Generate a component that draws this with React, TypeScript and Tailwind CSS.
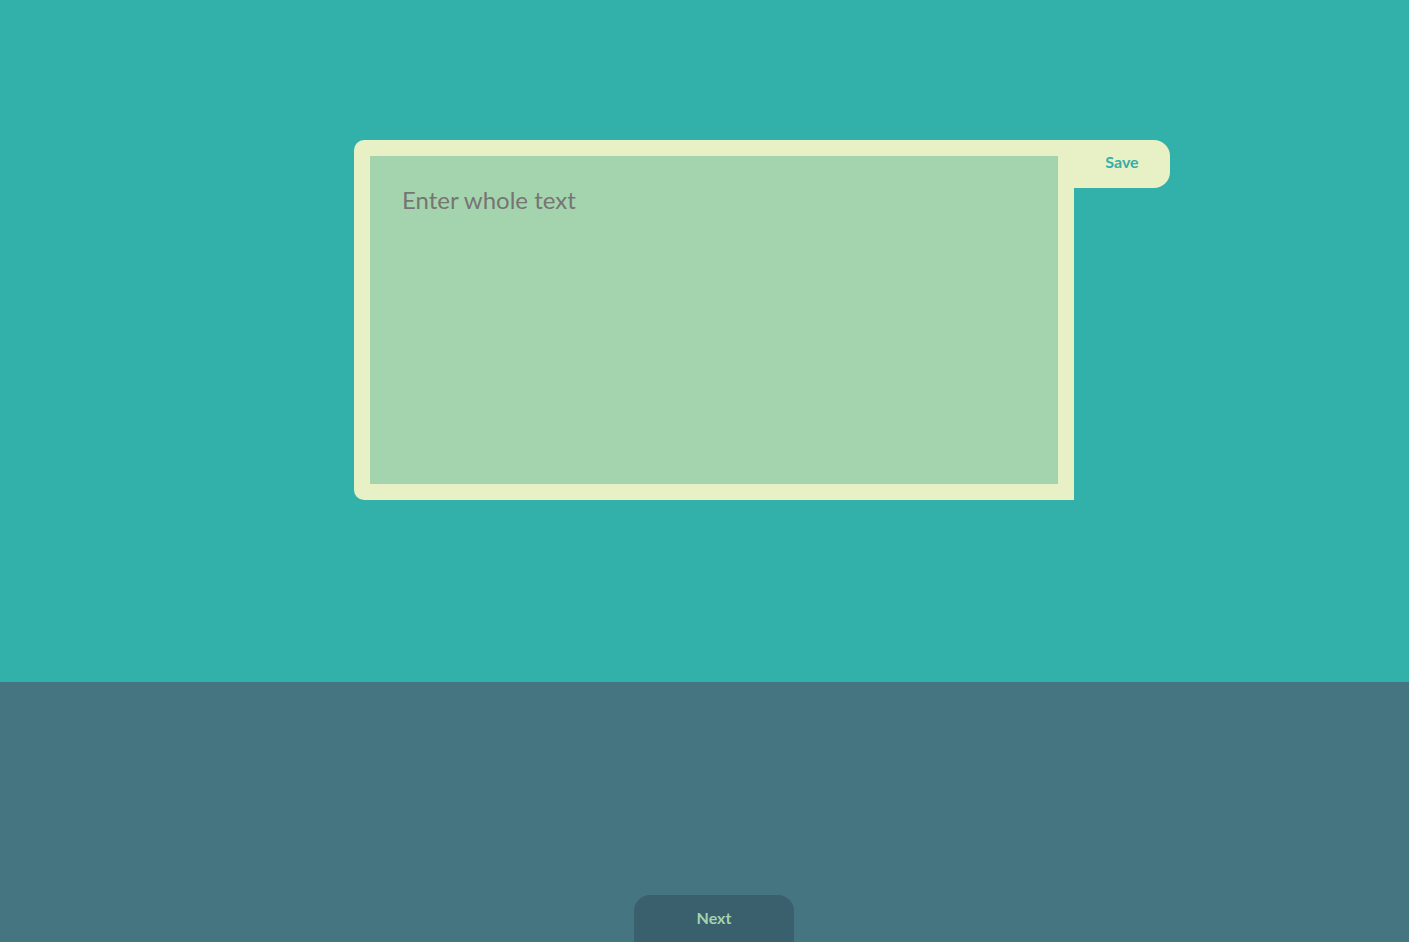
export default function App() {
  return (
    <div className="flex h-[942px] w-full flex-col overflow-hidden font-['Lato','Noto_Sans',sans-serif]">
      {/* Editor area */}
      <div className="flex h-[682px] items-start bg-[#32b0aa] pl-[354px] pt-[140px]">
        <div className="flex h-[360px] w-[720px] rounded-l-[10px] bg-[#e8f1c5] p-4">
          <textarea
            placeholder="Enter whole text"
            className="h-full w-full resize-none bg-[#a4d4ae] px-8 pt-[28px] text-2xl text-[#6f6f6f] outline-none placeholder:text-[#777474]"
          />
        </div>
        <button className="flex h-12 w-24 items-center justify-center rounded-r-2xl bg-[#e8f1c5] pb-[4px] text-base font-bold text-[#33aea9]">
          Save
        </button>
      </div>

      {/* Footer */}
      <div className="flex flex-1 items-end bg-[#467582] pl-[634px]">
        <button className="flex h-[47px] w-40 items-start justify-center rounded-t-2xl bg-[#3a5f6d] pt-[11px] text-base font-bold text-[#a3d4ad]">
          Next
        </button>
      </div>
    </div>
  );
}
